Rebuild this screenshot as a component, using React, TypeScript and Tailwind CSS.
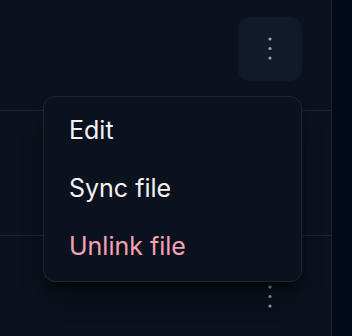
import React from "react";

const Dots = () => (
  <svg width="6" height="26" viewBox="0 0 6 26" className="text-slate-400">
    <circle cx="3" cy="3" r="1.6" fill="currentColor" />
    <circle cx="3" cy="12.5" r="1.6" fill="currentColor" />
    <circle cx="3" cy="22" r="1.6" fill="currentColor" />
  </svg>
);

const App = () => {
  const items = [
    { label: "Edit", danger: false },
    { label: "Sync file", danger: false },
    { label: "Unlink file", danger: true },
  ];

  return (
    <div
      className="relative flex h-[336px] w-[352px] overflow-hidden bg-[#020b1c]"
      style={{ fontFamily: "Inter, 'Noto Sans', sans-serif" }}
    >
      <div className="flex w-[332px] flex-col border-r border-[#1c2433] bg-[#0b111d]">
        <div className="flex h-[111px] shrink-0 justify-end border-b border-[#1c2433] pt-[17px] pr-[29px]">
          <button className="flex h-[64px] w-[64px] items-center justify-center rounded-[12px] bg-[#111a28]">
            <Dots />
          </button>
        </div>
        <div className="h-[125px] shrink-0 border-b border-[#1c2433]" />
        <div className="flex flex-1 justify-end pt-[29px] pr-[29px]">
          <div className="flex h-[64px] w-[64px] items-center justify-center">
            <Dots />
          </div>
        </div>
      </div>

      <div className="absolute top-[96px] left-[43px] w-[259px] rounded-[12px] border border-[#1e2634] bg-[#0b111d] pt-[5px] pb-[5px] shadow-xl shadow-black/40">
        {items.map((item, idx) => (
          <div
            key={idx}
            className={`flex h-[58px] items-center pl-[25px] text-[25px] ${
              item.danger ? "text-[#f4a3b4]" : "text-[#f1f3f6]"
            }`}
          >
            {item.label}
          </div>
        ))}
      </div>
    </div>
  );
};

export default App;
